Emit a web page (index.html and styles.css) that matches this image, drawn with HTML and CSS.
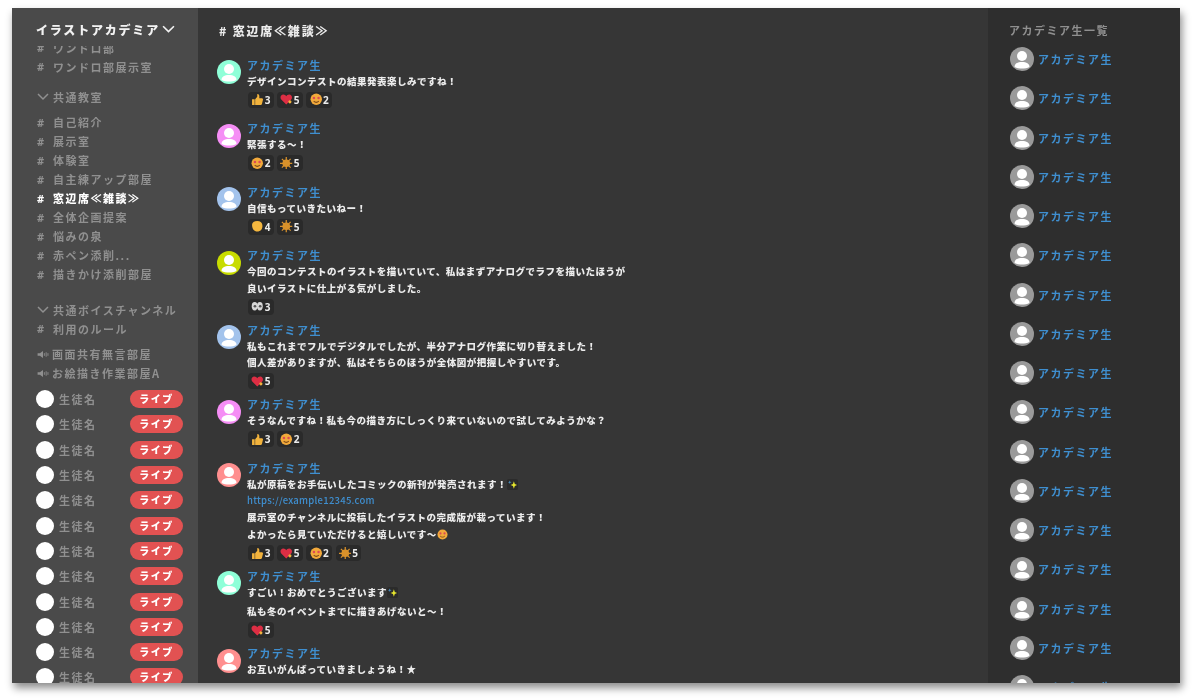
FILE: index.html
```html
<!DOCTYPE html>
<html lang="ja">
<head>
  <meta charset="UTF-8">
  <title>イラストアカデミア</title>
  <link rel="stylesheet" href="styles.css">
</head>
<body>

<!-- Icons used over and over -->
<svg class="defs" width="0" height="0">
  <symbol id="person" viewBox="0 0 24 24">
    <circle cx="12" cy="9" r="5" fill="#fff"/>
    <path d="M4.500 20c0-3.500 3-5 7.500-5s7.500 1.500 7.500 5c-2 1-5 1.500-7.500 1.500s-5.500-.5-7.500-1.500z" fill="#fff"/>
  </symbol>
  <symbol id="chevron" viewBox="0 0 12 8">
    <path d="M1 1l5 5 5-5" fill="none" stroke="currentColor" stroke-width="1.500"/>
  </symbol>
  <symbol id="speaker" viewBox="0 0 12 10">
    <path d="M0 3.500h2.500L6 1v8L2.500 6.500H0z" fill="currentColor"/>
    <path d="M7.500 3.500v3M9.500 2.500v5M11.500 3.500v3" stroke="currentColor" stroke-width="1"/>
  </symbol>
  <symbol id="thumb" viewBox="0 0 12 12">
    <path d="M1 6h2.500v5.500H1zM4 6l2-2.500V1c1.300 0 2 .8 2 2v2h2.500c.8 0 1.200.7 1 1.400l-1 4.200c-.2.600-.6.900-1.200.9H4z" fill="#f2b33d"/>
  </symbol>
  <symbol id="heart" viewBox="0 0 12 12">
    <path d="M6 11L1.200 6.200C-.2 4.700.5 1.500 3.200 1.500c1.300 0 2.200.7 2.800 1.700.6-1 1.500-1.700 2.800-1.700 2.700 0 3.400 3.200 2 4.700z" fill="#dd2e44"/>
    <circle cx="9.500" cy="8.500" r="1.500" fill="#f2b33d"/>
  </symbol>
  <symbol id="face" viewBox="0 0 12 12">
    <circle cx="6" cy="6" r="5.500" fill="#f2a93b"/>
    <circle cx="3.800" cy="4.800" r="1.200" fill="#dd4a55"/>
    <circle cx="8.200" cy="4.800" r="1.200" fill="#dd4a55"/>
    <path d="M3.500 7.800c1.500 1.400 3.500 1.400 5 0" fill="none" stroke="#7a4a1a" stroke-width="1"/>
  </symbol>
  <symbol id="sun" viewBox="0 0 12 12">
    <circle cx="6" cy="6" r="3.700" fill="#d9922b"/>
    <path d="M6 0v12M0 6h12M1.800 1.800l8.400 8.400M10.200 1.800l-8.400 8.400" stroke="#d9922b" stroke-width="1.200"/>
  </symbol>
  <symbol id="fist" viewBox="0 0 12 12">
    <path d="M1 4.500C1 2.500 3 1 6 1s5 1.500 5 4.500c0 3.500-2 5.500-5 5.500S1 8.500 1 4.500z" fill="#f5b73f"/>
  </symbol>
  <symbol id="eyes" viewBox="0 0 12 12">
    <ellipse cx="3.500" cy="6" rx="2.800" ry="4" fill="#d8d8d8"/>
    <ellipse cx="8.500" cy="6" rx="2.800" ry="4" fill="#d8d8d8"/>
    <circle cx="3.800" cy="6" r="1.300" fill="#555"/>
    <circle cx="8.800" cy="6" r="1.300" fill="#555"/>
  </symbol>
  <symbol id="sparkle" viewBox="0 0 12 12">
    <rect width="12" height="12" rx="2" fill="#2b2b2b"/>
    <path d="M7.500 2.500l1 3 2.500 1-2.500 1-1 3-1-3-2.500-1 2.500-1z" fill="#e6e62e"/>
    <path d="M3 1.500l.5 1.500L5 3.500l-1.500.5L3 5.500 2.500 4 1 3.500 2.500 3z" fill="#4a90c2"/>
  </symbol>
</svg>

<div class="app">

  <!-- Left: channels -->
  <aside class="sidebar">
    <div class="server">イラストアカデミア<svg class="server-chevron"><use href="#chevron"/></svg></div>
    <div class="channels">
      <div class="channel-list">
        <div class="channel"><span class="hash">#</span>ワンドロ部</div>
        <div class="channel"><span class="hash">#</span>ワンドロ部展示室</div>

        <div class="group group-first"><svg class="group-chevron"><use href="#chevron"/></svg>共通教室</div>
        <div class="group-items">
          <div class="channel"><span class="hash">#</span>自己紹介</div>
          <div class="channel"><span class="hash">#</span>展示室</div>
          <div class="channel"><span class="hash">#</span>体験室</div>
          <div class="channel"><span class="hash">#</span>自主練アップ部屋</div>
          <div class="channel active"><span class="hash">#</span>窓辺席≪雑談≫</div>
          <div class="channel"><span class="hash">#</span>全体企画提案</div>
          <div class="channel"><span class="hash">#</span>悩みの泉</div>
          <div class="channel"><span class="hash">#</span>赤ペン添削...</div>
          <div class="channel"><span class="hash">#</span>描きかけ添削部屋</div>
        </div>

        <div class="group group-voice"><svg class="group-chevron"><use href="#chevron"/></svg>共通ボイスチャンネル</div>
        <div class="channel"><span class="hash">#</span>利用のルール</div>

        <div class="voice-list">
          <div class="channel"><svg class="speaker"><use href="#speaker"/></svg>画面共有無言部屋</div>
          <div class="channel"><svg class="speaker"><use href="#speaker"/></svg>お絵描き作業部屋A</div>
        </div>

        <div class="students">
          <div class="student"><span class="dot"></span><span class="student-name">生徒名</span><span class="live">ライブ</span></div>
          <div class="student"><span class="dot"></span><span class="student-name">生徒名</span><span class="live">ライブ</span></div>
          <div class="student"><span class="dot"></span><span class="student-name">生徒名</span><span class="live">ライブ</span></div>
          <div class="student"><span class="dot"></span><span class="student-name">生徒名</span><span class="live">ライブ</span></div>
          <div class="student"><span class="dot"></span><span class="student-name">生徒名</span><span class="live">ライブ</span></div>
          <div class="student"><span class="dot"></span><span class="student-name">生徒名</span><span class="live">ライブ</span></div>
          <div class="student"><span class="dot"></span><span class="student-name">生徒名</span><span class="live">ライブ</span></div>
          <div class="student"><span class="dot"></span><span class="student-name">生徒名</span><span class="live">ライブ</span></div>
          <div class="student"><span class="dot"></span><span class="student-name">生徒名</span><span class="live">ライブ</span></div>
          <div class="student"><span class="dot"></span><span class="student-name">生徒名</span><span class="live">ライブ</span></div>
          <div class="student"><span class="dot"></span><span class="student-name">生徒名</span><span class="live">ライブ</span></div>
          <div class="student"><span class="dot"></span><span class="student-name">生徒名</span><span class="live">ライブ</span></div>
        </div>
      </div>
    </div>
  </aside>

  <!-- Middle: chat -->
  <main class="chat">
    <h1 class="chat-title"># 窓辺席≪雑談≫</h1>

    <div class="message">
      <div class="avatar mint"><svg><use href="#person"/></svg></div>
      <div class="body">
        <div class="name">アカデミア生</div>
        <p>デザインコンテストの結果発表楽しみですね！</p>
        <div class="reactions">
          <span class="reaction"><svg><use href="#thumb"/></svg>3</span>
          <span class="reaction"><svg><use href="#heart"/></svg>5</span>
          <span class="reaction"><svg><use href="#face"/></svg>2</span>
        </div>
      </div>
    </div>

    <div class="message">
      <div class="avatar pink"><svg><use href="#person"/></svg></div>
      <div class="body">
        <div class="name">アカデミア生</div>
        <p>緊張する〜！</p>
        <div class="reactions">
          <span class="reaction"><svg><use href="#face"/></svg>2</span>
          <span class="reaction"><svg><use href="#sun"/></svg>5</span>
        </div>
      </div>
    </div>

    <div class="message">
      <div class="avatar blue"><svg><use href="#person"/></svg></div>
      <div class="body">
        <div class="name">アカデミア生</div>
        <p>自信もっていきたいねー！</p>
        <div class="reactions">
          <span class="reaction"><svg><use href="#fist"/></svg>4</span>
          <span class="reaction"><svg><use href="#sun"/></svg>5</span>
        </div>
      </div>
    </div>

    <div class="message">
      <div class="avatar lime"><svg><use href="#person"/></svg></div>
      <div class="body">
        <div class="name">アカデミア生</div>
        <p>今回のコンテストのイラストを描いていて、私はまずアナログでラフを描いたほうが</p>
        <p>良いイラストに仕上がる気がしました。</p>
        <div class="reactions">
          <span class="reaction"><svg><use href="#eyes"/></svg>3</span>
        </div>
      </div>
    </div>

    <div class="message">
      <div class="avatar blue"><svg><use href="#person"/></svg></div>
      <div class="body">
        <div class="name">アカデミア生</div>
        <p>私もこれまでフルでデジタルでしたが、半分アナログ作業に切り替えました！</p>
        <p>個人差がありますが、私はそちらのほうが全体図が把握しやすいです。</p>
        <div class="reactions">
          <span class="reaction"><svg><use href="#heart"/></svg>5</span>
        </div>
      </div>
    </div>

    <div class="message">
      <div class="avatar pink"><svg><use href="#person"/></svg></div>
      <div class="body">
        <div class="name">アカデミア生</div>
        <p>そうなんですね！私も今の描き方にしっくり来ていないので試してみようかな？</p>
        <div class="reactions">
          <span class="reaction"><svg><use href="#thumb"/></svg>3</span>
          <span class="reaction"><svg><use href="#face"/></svg>2</span>
        </div>
      </div>
    </div>

    <div class="message">
      <div class="avatar salmon"><svg><use href="#person"/></svg></div>
      <div class="body">
        <div class="name">アカデミア生</div>
        <p>私が原稿をお手伝いしたコミックの新刊が発売されます！<svg class="inline-icon"><use href="#sparkle"/></svg></p>
        <p class="link">https://example12345.com</p>
        <p>展示室のチャンネルに投稿したイラストの完成版が載っています！</p>
        <p>よかったら見ていただけると嬉しいです〜<svg class="inline-icon"><use href="#face"/></svg></p>
        <div class="reactions">
          <span class="reaction"><svg><use href="#thumb"/></svg>3</span>
          <span class="reaction"><svg><use href="#heart"/></svg>5</span>
          <span class="reaction"><svg><use href="#face"/></svg>2</span>
          <span class="reaction"><svg><use href="#sun"/></svg>5</span>
        </div>
      </div>
    </div>

    <div class="message">
      <div class="avatar mint"><svg><use href="#person"/></svg></div>
      <div class="body">
        <div class="name">アカデミア生</div>
        <p>すごい！おめでとうございます<svg class="inline-icon"><use href="#sparkle"/></svg></p>
        <p class="para-gap">私も冬のイベントまでに描きあげないと〜！</p>
        <div class="reactions">
          <span class="reaction"><svg><use href="#heart"/></svg>5</span>
        </div>
      </div>
    </div>

    <div class="message">
      <div class="avatar salmon"><svg><use href="#person"/></svg></div>
      <div class="body">
        <div class="name">アカデミア生</div>
        <p>お互いがんばっていきましょうね！★</p>
      </div>
    </div>
  </main>

  <!-- Right: members -->
  <aside class="members">
    <div class="members-title">アカデミア生一覧</div>
    <div class="member"><div class="avatar gray"><svg><use href="#person"/></svg></div><span class="name">アカデミア生</span></div>
    <div class="member"><div class="avatar gray"><svg><use href="#person"/></svg></div><span class="name">アカデミア生</span></div>
    <div class="member"><div class="avatar gray"><svg><use href="#person"/></svg></div><span class="name">アカデミア生</span></div>
    <div class="member"><div class="avatar gray"><svg><use href="#person"/></svg></div><span class="name">アカデミア生</span></div>
    <div class="member"><div class="avatar gray"><svg><use href="#person"/></svg></div><span class="name">アカデミア生</span></div>
    <div class="member"><div class="avatar gray"><svg><use href="#person"/></svg></div><span class="name">アカデミア生</span></div>
    <div class="member"><div class="avatar gray"><svg><use href="#person"/></svg></div><span class="name">アカデミア生</span></div>
    <div class="member"><div class="avatar gray"><svg><use href="#person"/></svg></div><span class="name">アカデミア生</span></div>
    <div class="member"><div class="avatar gray"><svg><use href="#person"/></svg></div><span class="name">アカデミア生</span></div>
    <div class="member"><div class="avatar gray"><svg><use href="#person"/></svg></div><span class="name">アカデミア生</span></div>
    <div class="member"><div class="avatar gray"><svg><use href="#person"/></svg></div><span class="name">アカデミア生</span></div>
    <div class="member"><div class="avatar gray"><svg><use href="#person"/></svg></div><span class="name">アカデミア生</span></div>
    <div class="member"><div class="avatar gray"><svg><use href="#person"/></svg></div><span class="name">アカデミア生</span></div>
    <div class="member"><div class="avatar gray"><svg><use href="#person"/></svg></div><span class="name">アカデミア生</span></div>
    <div class="member"><div class="avatar gray"><svg><use href="#person"/></svg></div><span class="name">アカデミア生</span></div>
    <div class="member"><div class="avatar gray"><svg><use href="#person"/></svg></div><span class="name">アカデミア生</span></div>
    <div class="member"><div class="avatar gray"><svg><use href="#person"/></svg></div><span class="name">アカデミア生</span></div>
  </aside>

</div>

</body>
</html>
```
FILE: styles.css
```css
html, body {
  margin: 0;
  height: 700px;
  overflow: hidden;
}
body {
  box-sizing: border-box;
  padding: 8px 12px 17px;
  background: #fff;
  font-family: "Noto Sans CJK JP", "Noto Sans", sans-serif;
}
p, h1 {
  margin: 0;
}
.defs {
  position: absolute;
}
.app {
  display: flex;
  height: 675px;
  overflow: hidden;
  box-shadow: 2px 5px 8px rgba(0, 0, 0, .45);
  filter: blur(.45px);
}

/* sidebar */
.sidebar {
  display: flex;
  flex-direction: column;
  flex: 0 0 186px;
  background: #4a4a4a;
  color: #909090;
  font-size: 11px;
  font-weight: 700;
  letter-spacing: 1.5px;
}
.server {
  display: flex;
  align-items: center;
  flex: 0 0 38px;
  box-sizing: border-box;
  padding: 8px 0 3px 24px;
  color: #f2f2f2;
  font-size: 12px;
  font-weight: 900;
  letter-spacing: 1.8px;
}
.server-chevron {
  width: 13px;
  height: 9px;
  margin-left: 2px;
}
.channels {
  flex: 1;
  overflow: hidden;
}
.channel-list {
  margin-top: -8px;
  padding-left: 25px;
}
.channel, .group {
  display: flex;
  align-items: center;
  height: 19px;
  white-space: nowrap;
}
.channel.active {
  color: #fff;
  font-weight: 900;
}
.hash {
  flex: 0 0 16px;
  font-family: "Noto Sans", sans-serif;
  font-weight: 700;
  letter-spacing: 0;
}
.group-chevron {
  flex: 0 0 12px;
  width: 12px;
  height: 8px;
  margin-right: 4px;
}
.group-first {
  margin-top: 11.500px;
}
.group-items {
  margin-top: 6px;
}
.group-voice {
  margin-top: 16.500px;
}
.voice-list {
  margin-top: 6.500px;
}
.speaker {
  flex: 0 0 12px;
  width: 12px;
  height: 9px;
  margin-right: 3px;
}
.students {
  margin-top: 4px;
  margin-left: -1px;
  padding-right: 15px;
}
.student {
  display: flex;
  align-items: center;
  height: 25.300px;
}
.dot {
  flex: 0 0 18px;
  height: 18px;
  margin-right: 5px;
  border-radius: 50%;
  background: #fff;
}
.student-name {
  flex: 1;
}
.live {
  width: 53px;
  height: 18px;
  border-radius: 9px;
  background: #e25252;
  color: #fff;
  font-size: 10px;
  font-weight: 900;
  line-height: 18px;
  text-align: center;
}

/* chat */
.chat {
  flex: 1;
  overflow: hidden;
  box-sizing: border-box;
  padding: 13px 0 0 19px;
  background: #363636;
  color: #ececec;
}
.chat-title {
  height: 19px;
  margin: 0 0 16.500px 2px;
  font-size: 12px;
  font-weight: 900;
  letter-spacing: 1.800px;
  line-height: 19px;
}
.message {
  display: flex;
  box-sizing: border-box;
  min-height: 63.500px;
  padding-bottom: 7px;
}
.avatar {
  display: flex;
  flex: 0 0 24px;
  height: 24px;
  margin-top: 3.500px;
  margin-right: 6px;
  border-radius: 50%;
}
.avatar svg {
  width: 24px;
  height: 24px;
}
.mint { background: #8fffd8; }
.pink { background: #f58ef5; }
.blue { background: #a3c3ec; }
.lime { background: #c8dc00; }
.salmon { background: #ff8f8f; }
.gray { background: #9a9a9a; }
.name {
  height: 16px;
  color: #3f8fd0;
  font-size: 11px;
  font-weight: 700;
  letter-spacing: 1.500px;
  line-height: 16px;
}
.body p {
  font-size: 9.500px;
  font-weight: 900;
  letter-spacing: .5px;
  line-height: 16.600px;
  white-space: nowrap;
}
.body .link {
  color: #3f8fd0;
  font-weight: 500;
  letter-spacing: .25px;
}
.body .para-gap {
  margin-top: 3px;
}
.inline-icon {
  width: 11px;
  height: 11px;
  vertical-align: -2px;
}
.reactions {
  display: flex;
  gap: 3.600px;
  margin-top: 2.500px;
  margin-left: 1px;
}
.reaction {
  display: flex;
  align-items: center;
  justify-content: center;
  gap: 1px;
  box-sizing: border-box;
  width: 25.600px;
  height: 16px;
  border-radius: 4px;
  background: #2a2a2a;
  font-family: "Noto Sans", sans-serif;
  font-size: 10px;
  font-weight: 700;
}
.reaction svg {
  width: 12.500px;
  height: 12.500px;
}

/* members */
.members {
  flex: 0 0 192px;
  box-sizing: border-box;
  padding: 13px 0 0 21px;
  background: #2e2e2e;
}
.members-title {
  height: 18.400px;
  color: #909090;
  font-size: 11px;
  font-weight: 700;
  letter-spacing: 1.500px;
  line-height: 18px;
}
.member {
  display: flex;
  align-items: center;
  height: 39.250px;
  padding-left: 1px;
}
.member .avatar {
  margin: 0 4px 0 0;
}
```
